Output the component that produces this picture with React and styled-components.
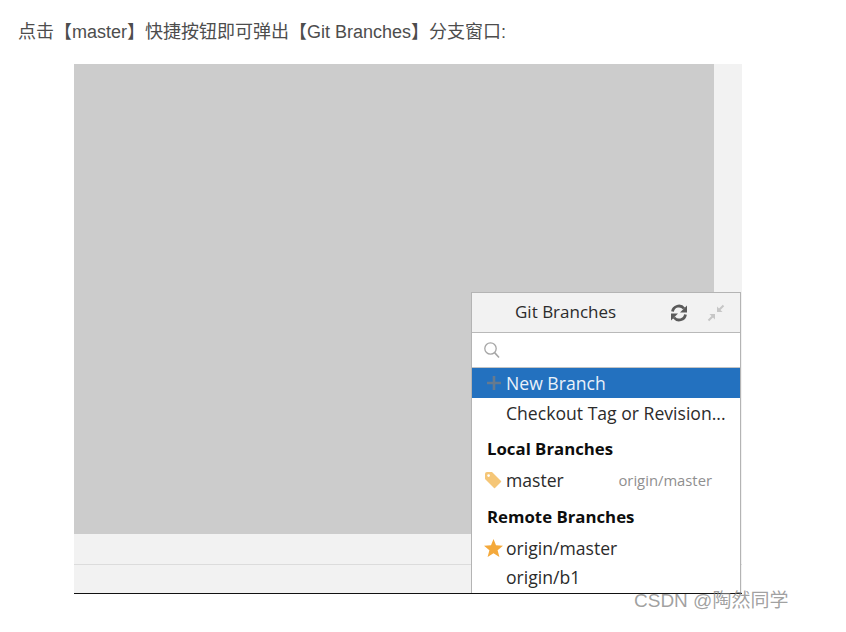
import * as React from 'react';
import styled, { createGlobalStyle } from 'styled-components';

const GlobalStyle = createGlobalStyle`
  html, body {
    margin: 0;
    padding: 0;
    background: #fff;
  }
`;

const Page = styled.div`
  position: relative;
  width: 846px;
  height: 632px;
  overflow: hidden;
  padding-top: 21px;
  box-sizing: border-box;
  font-family: "Liberation Sans", "Noto Sans CJK SC", sans-serif;
`;

const Paragraph = styled.p`
  margin: 0 0 0 18px;
  height: 43px;
  line-height: 23px;
  font-size: 18px;
  color: #4d4d4d;
`;

const Shot = styled.div`
  position: relative;
  display: flex;
  flex-direction: column;
  width: 668px;
  height: 529px;
  margin-left: 74px;
  background: #f2f2f2;
  border-bottom: 1px solid #111;
`;

const Main = styled.div`
  display: flex;
  height: 470px;
`;

const Canvas = styled.div`
  flex: 1;
  background: #cccccc;
`;

const SideStrip = styled.div`
  width: 28px;
  background: #f2f2f2;
`;

const StatusBar = styled.div`
  height: ${props => props.size};
  border-bottom: ${props => props.line ? '1px solid #dcdcdc' : 'none'};
  background: #f2f2f2;
`;

const Popup = styled.div`
  position: absolute;
  left: 397px;
  top: 228px;
  width: 270px;
  height: 301px;
  box-sizing: border-box;
  border: 1px solid #b4b4b4;
  border-bottom: none;
  background: #fff;
  font-family: "Open Sans", "Noto Sans", sans-serif;
  color: #2b2b2b;
`;

const PopupHeader = styled.div`
  display: flex;
  align-items: center;
  height: 39px;
  padding-left: 43px;
  padding-right: 15px;
  background: #f2f2f2;
  border-bottom: 1px solid #b9b9b9;
  font-size: 17px;
`;

const PopupTitle = styled.span`
  flex: 1;
  margin-top: -2px;
`;

const HeaderIcons = styled.div`
  display: flex;
  align-items: center;
  gap: 18px;
`;

const SearchRow = styled.div`
  display: flex;
  align-items: center;
  height: 34px;
  padding-left: 11px;
  border-bottom: 1px solid #c4c4c4;
`;

const Row = styled.div`
  display: flex;
  align-items: center;
  height: ${props => props.h || '29px'};
  padding-left: 12px;
  padding-right: 28px;
  font-size: 17.6px;
  background: ${props => props.selected ? '#2371bf' : 'transparent'};
  color: ${props => props.selected ? '#eaf2fa' : '#2b2b2b'};
  white-space: nowrap;
`;

const IconSlot = styled.span`
  display: flex;
  align-items: center;
  width: 22px;
  height: 20px;
  padding-left: ${props => props.inset || '0'};
  box-sizing: border-box;
  flex-shrink: 0;
`;

const RowLabel = styled.span`
  flex: 1;
`;

const Hint = styled.span`
  font-size: 14.8px;
  color: #8f8f8f;
`;

const SectionTitle = styled.div`
  display: flex;
  align-items: center;
  height: ${props => props.h};
  padding-left: 15px;
  font-size: 16.8px;
  font-weight: 700;
  color: #0d0d0d;
`;

const Watermark = styled.div`
  position: absolute;
  left: 634px;
  top: 589px;
  font-size: 19px;
  line-height: 24px;
  color: rgba(130, 130, 130, 0.75);
  white-space: nowrap;
`;

const RefreshIcon = () => (
  <svg width="20" height="20" viewBox="0 0 20 20" fill="none">
    <path d="M3.500 8.500 A6.500 6.500 0 0 1 15 5.500" stroke="#5a5a5a" strokeWidth="2.800" />
    <path d="M16.500 11.500 A6.500 6.500 0 0 1 5 14.500" stroke="#5a5a5a" strokeWidth="2.800" />
    <path d="M18 2.500 V9.500 H11 Z" fill="#5a5a5a" />
    <path d="M2 17.500 V10.500 H9 Z" fill="#5a5a5a" />
  </svg>
);

const CollapseIcon = () => (
  <svg width="18" height="18" viewBox="0 0 18 18" fill="none">
    <path d="M16.500 1.500 L11.500 6.500" stroke="#c6c6c6" strokeWidth="2" />
    <path d="M10 2.500 V8 H15.500 Z" fill="#c6c6c6" />
    <path d="M1.500 16.500 L6.500 11.500" stroke="#c6c6c6" strokeWidth="2" />
    <path d="M2.500 10 H8 V15.500 Z" fill="#c6c6c6" />
  </svg>
);

const SearchIcon = () => (
  <svg width="18" height="18" viewBox="0 0 18 18" fill="none">
    <circle cx="7.500" cy="7.500" r="5.700" stroke="#a6a6a6" strokeWidth="1.300" />
    <path d="M11.600 11.600 L16 16.500" stroke="#a6a6a6" strokeWidth="1.600" />
  </svg>
);

const PlusIcon = () => (
  <svg width="16" height="16" viewBox="0 0 16 16">
    <path d="M6.700 1 H9.300 V6.700 H15 V9.300 H9.300 V15 H6.700 V9.300 H1 V6.700 H6.700 Z" fill="#667a8e" />
  </svg>
);

const TagIcon = () => (
  <svg width="18" height="18" viewBox="0 0 18 18">
    <path d="M1 3 Q1 1 3 1 H8 L17 10 Q17.500 10.500 17 11 L11 17 Q10.500 17.500 10 17 L1 8 Z" fill="#f5c677" />
    <circle cx="4.600" cy="4.600" r="1.300" fill="#fff" />
  </svg>
);

const StarIcon = () => (
  <svg width="19" height="18" viewBox="0 0 19 18">
    <path d="M9.500 0 L12 6.300 L19 6.800 L13.600 11.200 L15.400 18 L9.500 14.300 L3.600 18 L5.400 11.200 L0 6.800 L7 6.300 Z" fill="#f4a93b" />
  </svg>
);

export default function App() {
  return (
    <Page>
      <GlobalStyle />
      <Paragraph>点击【master】快捷按钮即可弹出【Git Branches】分支窗口:</Paragraph>
      <Shot>
        <Main>
          <Canvas />
          <SideStrip />
        </Main>
        <StatusBar size="30px" line />
        <StatusBar size="28px" />
        <Popup>
          <PopupHeader>
            <PopupTitle>Git Branches</PopupTitle>
            <HeaderIcons>
              <RefreshIcon />
              <CollapseIcon />
            </HeaderIcons>
          </PopupHeader>
          <SearchRow>
            <SearchIcon />
          </SearchRow>
          <Row selected h="30px">
            <IconSlot inset="2px"><PlusIcon /></IconSlot>
            <RowLabel>New Branch</RowLabel>
          </Row>
          <Row>
            <IconSlot />
            <RowLabel>Checkout Tag or Revision...</RowLabel>
          </Row>
          <SectionTitle h="43px">Local Branches</SectionTitle>
          <Row h="20px">
            <IconSlot><TagIcon /></IconSlot>
            <RowLabel>master</RowLabel>
            <Hint>origin/master</Hint>
          </Row>
          <SectionTitle h="53px">Remote Branches</SectionTitle>
          <Row h="10px">
            <IconSlot><StarIcon /></IconSlot>
            <RowLabel>origin/master</RowLabel>
          </Row>
          <Row h="48px">
            <IconSlot />
            <RowLabel>origin/b1</RowLabel>
          </Row>
        </Popup>
      </Shot>
      <Watermark>CSDN @陶然同学</Watermark>
    </Page>
  );
}
